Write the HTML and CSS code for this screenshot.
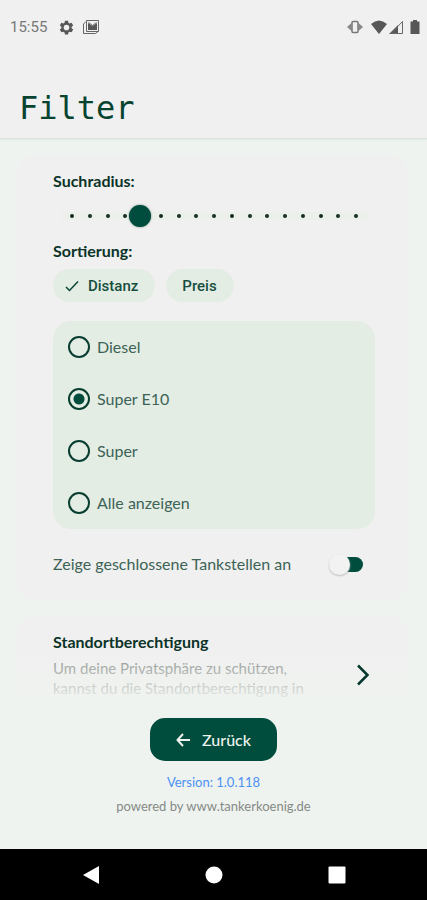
FILE: index.html
```html
<!DOCTYPE html>
<html lang="de">
<head>
<meta charset="utf-8">
<meta name="viewport" content="width=device-width, initial-scale=1">
<title>Filter</title>
<link rel="stylesheet" href="styles.css">
</head>
<body>
<div class="app">
  <header class="header">
    <div class="status">
      <div class="status-group">
        <span class="clock">15:55</span>
        <svg class="gear" width="15" height="15" viewBox="0 0 24 24"><path fill="#575757" fill-rule="evenodd" d="M9.500 1h5l.6 3.200 2 1.200 3.100-1.100 2.500 4.400-2.500 2.100v2.400l2.500 2.100-2.500 4.400-3.100-1.100-2 1.200-.6 3.200h-5l-.6-3.200-2-1.200-3.100 1.100-2.500-4.400 2.500-2.100v-2.400L1.300 8.700l2.500-4.400 3.100 1.100 2-1.200zM12 7.500a4.500 4.500 0 1 0 0 9 4.500 4.500 0 0 0 0-9z"/></svg>
        <svg width="18" height="16" viewBox="0 0 18 16" fill="none" stroke="#666"><path d="M4 2.500 1.500 5v9.500h12l2.500-2"/><path d="M4.500 1.500h12v11h-12z"/><path fill="#575757" stroke="none" d="M6 4l4.500 3L15 4v7H6z"/><path d="M6.500 3.500l4 3 4-3"/></svg>
      </div>
      <div class="status-group right">
        <svg class="vibrate" width="16" height="14" viewBox="0 0 16 14"><path fill="#888" d="M4.500 3v8L0 7zM11.500 3v8L16 7z"/><rect x="5" y="1.500" width="6" height="11" rx="1" fill="#f0f0f0" stroke="#777" stroke-width="1.500"/></svg>
        <svg width="16" height="14" viewBox="0 0 16 14"><path fill="#575757" d="M0 4Q8-3 16 4L8 14z"/></svg>
        <svg width="14" height="14" viewBox="0 0 14 14"><path fill="#575757" d="M9 5v9H0z"/><path fill="none" stroke="#666" d="M2 13.500h11.500v-12z"/></svg>
        <svg class="battery" width="10" height="14" viewBox="0 0 10 14"><path fill="#575757" d="M3 0h4v1.500h2.500V14h-9V1.500H3z"/></svg>
      </div>
    </div>
    <h1>Filter</h1>
  </header>

  <main class="content">
    <section class="card">
      <label class="label" for="radius">Suchradius:</label>
      <div class="slider">
        <div class="ticks"><i></i><i></i><i></i><i></i><i></i><i></i><i></i><i></i><i></i><i></i><i></i><i></i><i></i><i></i><i></i><i></i><i></i></div>
        <input id="radius" type="range" min="0" max="25" value="6">
      </div>
      <h2 class="label">Sortierung:</h2>
      <div class="chips">
        <button class="chip" type="button" aria-pressed="true"><svg width="14" height="12" viewBox="0 0 14 12" fill="none" stroke="#064536" stroke-width="1.500"><path d="M1 7l3.500 3.500L13 1.500"/></svg>Distanz</button>
        <button class="chip" type="button" aria-pressed="false">Preis</button>
      </div>
      <div class="fuels" role="radiogroup" aria-label="Kraftstoff">
        <label><input type="radio" name="fuel">Diesel</label>
        <label><input type="radio" name="fuel" checked>Super E10</label>
        <label><input type="radio" name="fuel">Super</label>
        <label><input type="radio" name="fuel">Alle anzeigen</label>
      </div>
      <label class="switch-row">Zeige geschlossene Tankstellen an<input class="switch" type="checkbox" role="switch"></label>
    </section>

    <section class="card permission">
      <div>
        <h2 class="label">Standortberechtigung</h2>
        <p>Um deine Privatsphäre zu schützen, kannst du die Standortberechtigung in</p>
      </div>
      <button class="open" type="button" aria-label="Standortberechtigung öffnen"><svg width="14" height="22" viewBox="0 0 14 22" fill="none" stroke="#06392d" stroke-width="2.500"><path d="M2 1.500 11.500 11 2 20.500"/></svg></button>
    </section>
  </main>

  <footer class="footer">
    <button class="back" type="button"><svg width="14" height="14" viewBox="0 0 14 14" fill="none" stroke="currentColor" stroke-width="2"><path d="M14 7H1.500M7 1 1.500 7 7 13"/></svg>Zurück</button>
    <a class="version" href="#version">Version: 1.0.118</a>
    <span class="powered">powered by www.tankerkoenig.de</span>
  </footer>

  <nav class="system-nav">
    <button type="button" aria-label="Zurück"><svg width="18" height="20" viewBox="0 0 18 20"><path fill="#fff" d="M17 1v18L1 10z"/></svg></button>
    <button type="button" aria-label="Startseite"><svg width="18" height="18" viewBox="0 0 18 18"><circle cx="9" cy="9" r="8.500" fill="#fff"/></svg></button>
    <button type="button" aria-label="Übersicht"><svg width="18" height="18" viewBox="0 0 18 18"><rect width="17" height="17" x=".5" y=".5" rx="1" fill="#fff"/></svg></button>
  </nav>
</div>
</body>
</html>
```
FILE: styles.css
```css
* { box-sizing: border-box; }

body {
  margin: 0;
  background: #eff3ef;
  color: #3c6356;
  font: 16px/20px Lato, sans-serif;
}

button {
  border: 0;
  padding: 0;
  background: none;
  font: inherit;
}

svg { display: block; flex: none; }
h1, h2, p { margin: 0; }

.app {
  display: flex;
  flex-direction: column;
  height: 100vh;
  min-height: 720px;
}

.header {
  flex: none;
  background: #f0f0f0;
  border-bottom: 1px solid #dce3e0;
  box-shadow: 0 1px 2px #dfe9e6;
}

.status {
  display: flex;
  justify-content: space-between;
  align-items: center;
  height: 54px;
  padding: 0 7px 0 10px;
}

.status-group { display: flex; align-items: center; gap: 8px; }
.right { gap: 2px; }
.vibrate { margin-right: 6px; }
.battery { margin-left: 5px; }
.clock { font: 15px/20px Roboto, sans-serif; color: #777; }
.gear { margin-left: 4px; }

h1 {
  padding: 34px 19px 10px;
  color: #06442f;
  font: 32px/40px "DejaVu Sans Mono", monospace;
}

.content {
  position: relative;
  flex: 1;
  min-height: 0;
  overflow: hidden;
  padding: 16px 18px 0 16px;
}

.content::after {
  content: "";
  position: absolute;
  inset: auto 0 0;
  height: 56px;
  background: linear-gradient(#eff3ef00, #eff3ef);
  pointer-events: none;
}

.card {
  margin-bottom: 16px;
  padding: 16px 34px 20px 37px;
  border-radius: 20px;
  background: #f0f0f0;
}

.label {
  display: block;
  color: #0b3328;
  font-size: 16px;
  font-weight: 700;
  line-height: 20px;
}

.slider {
  position: relative;
  height: 50px;
  padding: 21px 8px;
}

.ticks {
  display: flex;
  justify-content: space-between;
  align-items: center;
  height: 8px;
  padding: 0 9px;
  border-radius: 4px;
  background: #ebf0eb;
}

.ticks i {
  width: 4px;
  height: 4px;
  border-radius: 50%;
  background: #182d25;
}

.slider input {
  position: absolute;
  inset: 0 8px;
  margin: 0;
  appearance: none;
  background: none;
}

.slider input::-webkit-slider-thumb {
  appearance: none;
  width: 22px;
  height: 22px;
  border-radius: 50%;
  background: #004d3d;
  box-shadow: 0 0 2px #52766c;
}

.chips { display: flex; gap: 11px; margin: 8px 0 19px; }

.chip {
  display: flex;
  align-items: center;
  gap: 9px;
  height: 33px;
  padding: 0 17px 0 16px;
  border-radius: 17px;
  background: #e4ede4;
  color: #174f3f;
  font: 500 15px/20px Roboto, sans-serif;
}

.chip[aria-pressed="true"] { padding-left: 12px; }

.fuels { border-radius: 18px; background: #e4ede4; }

.fuels label {
  display: flex;
  align-items: center;
  gap: 7px;
  height: 52px;
  padding: 0 15px;
}

.fuels input {
  width: 22px;
  height: 22px;
  margin: 0;
  appearance: none;
  border: 2px solid #083d30;
  border-radius: 50%;
}

.fuels input:checked { background: radial-gradient(circle, #004d3d 5px, transparent 6px); }

.switch-row {
  display: flex;
  align-items: center;
  justify-content: space-between;
  margin-top: 19px;
  padding-right: 12px;
  height: 32px;
}

.switch {
  position: relative;
  width: 32px;
  height: 15px;
  margin: 0;
  appearance: none;
  border-radius: 8px;
  background: #004d3d;
}

.switch::before {
  content: "";
  position: absolute;
  top: -3px;
  left: -2px;
  width: 21px;
  height: 21px;
  border-radius: 50%;
  background: #f2f2f2;
  box-shadow: 0 1px 2px #bbb;
}

.switch:checked::before { left: 13px; }

.permission {
  display: flex;
  align-items: center;
  justify-content: space-between;
  gap: 32px;
}

.permission p { margin-top: 6px; color: #858a87; font-size: 15px; }

.open {
  position: relative;
  z-index: 1;
  margin: 20px 5px 0 0;
}

.footer {
  display: flex;
  flex: none;
  flex-direction: column;
  align-items: center;
  padding: 13px 0 31px;
}

.back {
  display: flex;
  align-items: center;
  gap: 12px;
  height: 43px;
  padding: 0 26px;
  border-radius: 15px;
  background: #004d3d;
  color: #eff3ef;
  font-weight: 500;
}

.version, .powered { font-size: 13px; line-height: 24px; }
.version { margin-top: 9px; color: #4b91f5; text-decoration: none; }
.powered { color: #858a87; }

.system-nav {
  display: flex;
  flex: none;
  align-items: center;
  justify-content: space-around;
  height: 51px;
  padding: 0 29px;
  background: #000;
}
```
